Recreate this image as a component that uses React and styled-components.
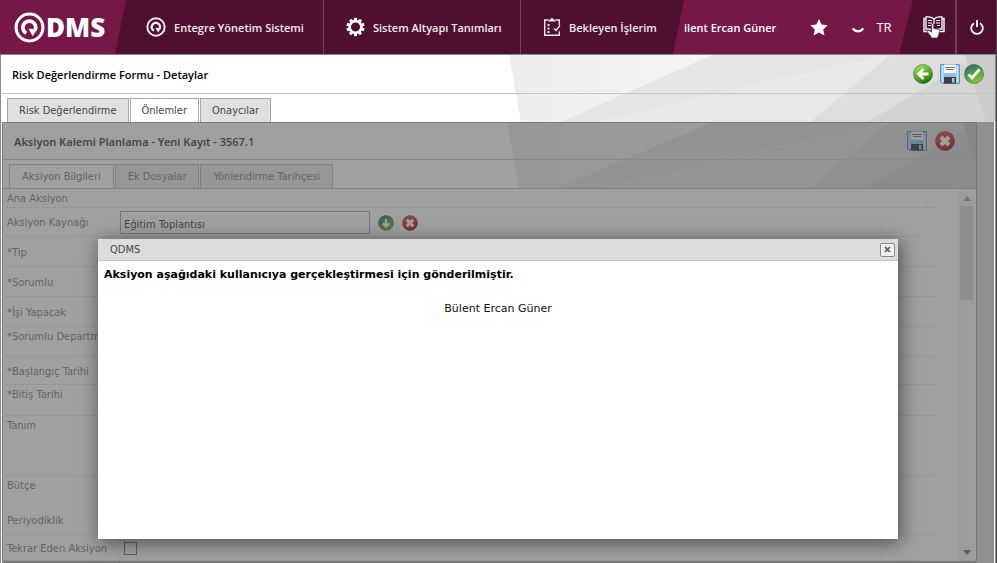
import React, { useState } from 'react'
import styled, { createGlobalStyle } from 'styled-components';

const GlobalStyle = createGlobalStyle`
* { box-sizing: border-box; }
body {
    margin: 0;
    background: #fff;
    font-family: "DejaVu Sans Condensed", "Noto Sans", sans-serif;
    font-size: 11px;
}
button, input { font-family: inherit; font-size: inherit; }
`;

const Page = styled.div`
display: flex;
flex-direction: column;
min-height: 100vh;
border-right: 1px solid #4a4a4a;
`;

const TopBar = styled.header`
display: flex;
height: 54px;
background: #4f0f30;
color: #fff;
font-family: "Open Sans", "Noto Sans", sans-serif;
font-size: 11px;
font-weight: 600;
`;

const Brand = styled.a`
display: flex;
align-items: center;
gap: 1px;
width: 126px;
padding-left: 14px;
background: #751747;
clip-path: polygon(0 0, 100% 0, calc(100% - 11px) 100%, 0 100%);
color: #fff;
text-decoration: none;
font-size: 26px;
font-weight: 800;
flex: none;
`;

const NavItem = styled.a`
display: flex;
align-items: center;
gap: 8px;
flex: 0 0 ${props => props.$width}px;
padding-left: ${props => props.$first ? 20 : 22}px;
border-right: ${props => props.$last ? 'none' : '1px solid #74415a'};
color: #f3eaee;
text-decoration: none;
white-space: nowrap;
`;

const UserBar = styled.div`
display: flex;
align-items: center;
flex: 1;
padding: 0 22px 0 11px;
background: #751747;
clip-path: polygon(11px 0, 100% 0, calc(100% - 14px) 100%, 0 100%);
white-space: nowrap;
`;

const UserName = styled.span`
flex: 1;
`;

const BarButton = styled.button`
display: flex;
align-items: center;
justify-content: center;
width: ${props => props.$width}px;
padding: 0;
border: none;
border-left: ${props => props.$line ? '2px solid #74415a' : 'none'};
background: none;
color: #fff;
cursor: pointer;
font-weight: 400;
font-size: 13px;
`;

const Frame = styled.main`
display: flex;
flex-direction: column;
flex: 1;
padding: 0 0 0 1px;
border: 1px solid #8a8a8a;
border-width: 1px 1px 0 1px;
`;

const Heading = styled.div`
position: relative;
`;

const Backdrop = styled.svg`
position: absolute;
top: 0;
right: ${props => props.$inner ? -17 : 0}px;
height: 100%;
width: 487px;
`;

const TitleRow = styled.div`
position: relative;
display: flex;
align-items: center;
height: ${props => props.$height}px;
padding: 0 ${props => props.$right}px 0 ${props => props.$left}px;
border-bottom: 1px solid ${props => props.$line};
color: ${props => props.$color};
`;

const Title = styled.h1`
flex: 1;
margin: 0;
font-family: "Open Sans", "Noto Sans", sans-serif;
font-size: 11px;
font-weight: 600;
`;

const PanelTitle = styled.h2`
flex: 1;
margin: 0;
font-family: "Noto Sans", sans-serif;
font-size: 11px;
font-weight: 600;
`;

const IconButton = styled.button`
display: flex;
margin-left: ${props => props.$gap || 0}px;
padding: 0;
border: none;
background: none;
cursor: pointer;
`;

const TabRow = styled.div`
position: relative;
display: flex;
gap: 1px;
padding: 4px 0 0 ${props => props.$left}px;
`;

const Tab = styled.button`
height: 24px;
padding: 0 ${props => props.$inner ? 12 : 11}px;
border: 1px solid ${props => props.$inner ? '#c0c0c0' : '#a8a8a8'};
border-bottom: none;
background: ${props => props.$active ? '#fff' : props.$inner ? '#ededed' : '#e0e0e0'};
color: ${props => props.$inner ? '#858585' : '#444'};
cursor: pointer;
`;

const Body = styled.div`
position: relative;
display: flex;
flex: 1;
margin-right: 1px;
padding-right: 17px;
background: #dcdcdc;
`;

const Panel = styled.section`
display: flex;
flex-direction: column;
flex: 1;
border: 1px solid #b0b0b0;
border-bottom-width: 2px;
border-radius: 0 0 4px 4px;
background: #fff;
overflow: hidden;
`;

const Content = styled.div`
display: flex;
flex: 1;
border-top: 1px solid #c0c0c0;
`;

const Form = styled.form`
flex: 1;
padding: 0 22px 0 3px;
`;

const Row = styled.div`
display: grid;
grid-template-columns: 110px 1fr 14px;
column-gap: 2px;
height: ${props => props.$height}px;
`;

const Cell = styled.div`
display: flex;
align-items: ${props => props.$top ? 'flex-start' : 'center'};
padding: 2px 0 0 1px;
border-bottom: ${props => props.$plain ? 'none' : '1px dotted #d6d6d6'};
line-height: 16px;
white-space: nowrap;
color: #858585;
`;

const SourceInput = styled.input`
width: 250px;
height: 23px;
margin-left: 1px;
margin-right: 8px;
padding: 3px 3px 0;
border: 1px solid #acacac;
background: transparent;
color: #454545;
`;

const Check = styled.input`
appearance: none;
width: 13px;
height: 13px;
margin: 0 0 0 5px;
border: 1px solid #7a7a7a;
`;

const ScrollTrack = styled.div`
display: flex;
flex-direction: column;
align-items: center;
width: 17px;
margin-right: 1px;
padding: 7px 0 6px;
background: #f7f7f7;
`;

const ScrollThumb = styled.div`
width: 13px;
height: 94px;
margin: 5px 0 auto;
background: #dadada;
`;

const Overlay = styled.div`
position: absolute;
inset: 0;
display: flex;
justify-content: center;
align-items: flex-start;
padding-top: 117px;
background: rgba(65, 65, 65, 0.5);
`;

const Dialog = styled.div`
width: 800px;
max-width: 90%;
min-height: 300px;
background: #fff;
box-shadow: 2px 3px 18px rgba(0, 0, 0, 0.55);
`;

const DialogBar = styled.div`
display: flex;
align-items: center;
justify-content: space-between;
height: 22px;
padding: 0 3px 0 12px;
border-bottom: 1px solid #c4c4c4;
background: #dcdcdc;
color: #444;
`;

const CloseButton = styled.button`
display: flex;
align-items: center;
justify-content: center;
width: 15px;
height: 14px;
padding: 0;
border: 1px solid #888;
border-radius: 2px;
background: #f0f0f0;
cursor: pointer;
`;

const Message = styled.div`
padding: 5px 6px;
font-family: "DejaVu Sans", sans-serif;
line-height: 17px;
color: #111;
`;

const Strong = styled.p`
margin: 0 0 17px;
font-weight: 700;
color: #000;
`;

const Person = styled.p`
margin: 0;
text-align: center;
`;

// circled Q used both in the logo and in the menu
const QMark = ({ size }) => (
    <svg width={size} height={size} viewBox="0 0 30 30" fill="none" stroke="currentColor">
        <circle cx="15" cy="15" r="13" strokeWidth="3" />
        <path d="M12 20.500a6.200 6.200 0 1 1 8.400-3" strokeWidth="3.600" />
        <path d="M14 16l8.500 1-4.500 6.500z" fill="currentColor" stroke="none" />
    </svg>
)

const GearIcon = () => (
    <svg width="19" height="20" viewBox="-10 -10 20 20" fill="#fff">
        {[0, 36, 72, 108, 144, 180, 216, 252, 288, 324].map(a =>
            <rect key={a} x="-1.6" y="-9.6" width="3.2" height="4" transform={`rotate(${a})`} />)}
        <circle r="6.2" fill="none" stroke="#fff" strokeWidth="2.8" />
    </svg>
)

const ClipboardIcon = () => (
    <svg width="18" height="20" viewBox="0 0 18 20" fill="none" stroke="#f3eaee" strokeWidth="1.4">
        <path d="M5 3H1.7v15.3h14.6v-4M16.3 8V3H13" />
        <path d="M5.5 4.5V2.5h2a1.5 1.5 0 0 1 3 0h2v2z" fill="#f3eaee" stroke="none" />
        <path d="M4.500 8h2M4.500 11.500h2M4.500 15h2" strokeWidth="2" />
        <path d="M11 11.5l2 2 4-5" />
    </svg>
)

const StarIcon = () => (
    <svg width="18" height="17" viewBox="0 0 18 17" fill="#fff">
        <path d="M9 0l2.6 5.6 6.2.7-4.6 4.1 1.3 6.1L9 13.4l-5.5 3.1 1.3-6.1L.2 6.3l6.2-.7z" />
    </svg>
)

const ChevronIcon = () => (
    <svg width="12" height="11" viewBox="0 0 12 11" fill="none" stroke="#fff" strokeWidth="2.200">
        <path d="M.7 6.500Q3 9.300 6 9.300 9 9.300 11.300 6.500" />
    </svg>
)

const BookIcon = () => (
    <svg width="22" height="23" viewBox="0 0 22 23" fill="none" stroke="#fff">
        <path d="M7 15.5H1V2.5h1.5M15 15.5h6V2.5h-1.5" strokeWidth="1.4" />
        <path d="M11 3C9 1 6 .7 3 1v12c3-.2 4 0 5 .5M11 3c2-2 5-2.300 8-2v12c-3-.2-4 0-5 .5M11 3v5" strokeWidth="1.3" />
        <path d="M5 4.500h4M5 7h4M5 9.500h3M13 4.500h4M13 7h4M14 9.500h3" />
        <path d="M8.500 8.500c0-1.400 2.200-1.400 2.200 0v4l4.500.8c1 .2 1.300 1 1.200 2-.2 3-1.200 4-1.800 6.700H8.700C7.500 19 5 17.500 4.200 15c.8-1 2.800-.3 4.300 1.200z" fill="#fff" stroke="#4f0f30" strokeWidth=".6" />
    </svg>
)

const PowerIcon = () => (
    <svg width="14" height="15" viewBox="0 0 14 15" fill="none" stroke="#fff" strokeWidth="1.800">
        <path d="M4 3.200a5.800 5.800 0 1 0 6 0M7 0v7" />
    </svg>
)

const FloppyIcon = () => (
    <svg width="20" height="20" viewBox="0 0 20 20">
        <path d="M.5.5h19v19H2L.5 18z" fill="#8fc0ee" stroke="#5b8fc8" />
        <path d="M1.500 1.500h2v16h-2zM16.500 1.500h2v17h-2z" fill="#c3e0f8" />
        <path d="M4 .5h12V9H4z" fill="#f8f8f8" />
        <path d="M5 3.500h10M6 5.500h8" stroke="#777" />
        <path d="M4 13h12v6.500H4z" fill="#3a3f45" />
        <path d="M12 14h2.500v4.500H12z" fill="#9ccaf0" />
    </svg>
)

const shapes = {
    back: 'M15.500 10H6M10.500 5L5.500 10l5 5',
    check: 'M4.500 10.500l3.500 3.500 7.500-8.500',
    cross: 'M6 6l8 8M14 6l-8 8',
    down: 'M10 5v9M6 10.500l4 4 4-4'
}

const fills = {
    back: ['#8fdc45', '#1f800c'],
    check: ['#357a62', '#7dc437'],
    cross: ['#d9534f', '#b8201e'],
    down: ['#2f8060', '#76b93c']
}

const RoundIcon = ({ type, size = 20 }) => (
    <svg width={size} height={size} viewBox="0 0 20 20">
        <defs>
            <linearGradient id={`g-${type}`} x1="0" y1="0" x2=".5" y2="1">
                <stop offset="0.2" stopColor={fills[type][0]} />
                <stop offset="1" stopColor={fills[type][1]} />
            </linearGradient>
        </defs>
        <circle cx="10" cy="10" r="9.5" fill={`url(#g-${type})`} stroke="#00000055" />
        <path d={shapes[type]} fill="none" stroke="#fff" strokeWidth={type === 'cross' ? 4 : 2.8} />
    </svg>
)

// faceted grey artwork behind the title rows
const Art = ({ inner }) => (
    <Backdrop $inner={inner} viewBox="508 55 487 67" preserveAspectRatio="none" aria-hidden="true">
        <defs>
            <linearGradient id="facet" x1="0" x2="1">
                <stop offset="0" stopColor="#ededed" />
                <stop offset="1" stopColor="#f5f5f5" />
            </linearGradient>
        </defs>
        <path d="M509 55H712L560 122H521z" fill="url(#facet)" />
        <path d="M712 55H890L780 79 600 122H560z" fill="#e5e5e5" />
        <path d="M890 55L810 122H600L780 79z" fill="#e8e8e8" />
        <path d="M890 55H995V122H810z" fill="#dedede" />
        <path d="M965 63L868 122H995V55z" fill="#d4d4d4" />
        <path d="M965 55H995V122h-9z" fill="#cccccc" />
    </Backdrop>
)

const rows = [
    { label: 'Ana Aksiyon', height: 18, top: true, tail: true },
    { label: 'Aksiyon Kaynağı', height: 30, source: true },
    { label: '*Tip', height: 30, tail: true },
    { label: '*Sorumlu', height: 30, tail: true },
    { label: '*İşi Yapacak', height: 30, tail: true },
    { label: '*Sorumlu Departmanı', height: 30, top: true, tail: true },
    { label: '*Başlangıç Tarihi', height: 28, tail: true },
    { label: '*Bitiş Tarihi', height: 31, top: true, tail: true },
    { label: 'Tanım', height: 60, top: true, tail: true },
    { label: 'Bütçe', height: 30, top: true, plain: true },
    { label: 'Periyodiklik', height: 29, tail: true },
    { label: 'Tekrar Eden Aksiyon', height: 26, check: true }
]

const App = () => {
    const [source, setSource] = useState('Eğitim Toplantısı')
    const [open, setOpen] = useState(true)

    return (
        <Page>
            <GlobalStyle />
            <TopBar>
                <Brand href="#"><QMark size={31} /><span>DMS</span></Brand>
                <NavItem href="#" $width={198} $first><QMark size={20} />Entegre Yönetim Sistemi</NavItem>
                <NavItem href="#" $width={197}><GearIcon />Sistem Altyapı Tanımları</NavItem>
                <NavItem href="#" $width={152} $last><ClipboardIcon />Bekleyen İşlerim</NavItem>
                <UserBar>
                    <UserName>ilent Ercan Güner</UserName>
                    <BarButton $width={40} aria-label="Favoriler"><StarIcon /></BarButton>
                    <BarButton $width={38} aria-label="Menü"><ChevronIcon /></BarButton>
                    <BarButton $width={14}>TR</BarButton>
                </UserBar>
                <BarButton $width={42} aria-label="Yardım"><BookIcon /></BarButton>
                <BarButton $width={41} $line aria-label="Çıkış"><PowerIcon /></BarButton>
            </TopBar>
            <Frame>
                <Heading>
                    <Art />
                    <TitleRow $height={39} $left={10} $right={11} $line="#c4c4c4" $color="#000">
                        <Title>Risk Değerlendirme Formu - Detaylar</Title>
                        <IconButton aria-label="Geri"><RoundIcon type="back" /></IconButton>
                        <IconButton $gap={7} aria-label="Kaydet"><FloppyIcon /></IconButton>
                        <IconButton $gap={4} aria-label="Onayla"><RoundIcon type="check" /></IconButton>
                    </TitleRow>
                    <TabRow $left={5}>
                        <Tab>Risk Değerlendirme</Tab>
                        <Tab $active>Önlemler</Tab>
                        <Tab>Onaycılar</Tab>
                    </TabRow>
                </Heading>
                <Body>
                    <Panel>
                        <Heading>
                            <Art inner />
                            <TitleRow $height={37} $left={11} $right={21} $line="#d0d0d0" $color="#4a4a4a">
                                <PanelTitle>Aksiyon Kalemi Planlama - Yeni Kayıt - 3567.1</PanelTitle>
                                <IconButton aria-label="Aksiyonu kaydet"><FloppyIcon /></IconButton>
                                <IconButton $gap={8} aria-label="Kapat"><RoundIcon type="cross" /></IconButton>
                            </TitleRow>
                            <TabRow $left={6}>
                                <Tab $inner $active>Aksiyon Bilgileri</Tab>
                                <Tab $inner>Ek Dosyalar</Tab>
                                <Tab $inner>Yönlendirme Tarihçesi</Tab>
                            </TabRow>
                        </Heading>
                        <Content>
                            <Form>
                                {rows.map((row, index) =>
                                    <Row key={index} $height={row.height}>
                                        <Cell as="label" htmlFor={`field${index}`} $top={row.top} $plain={row.plain}>{row.label}</Cell>
                                        <Cell $plain={row.plain}>
                                            {row.source && <>
                                                <SourceInput id={`field${index}`} value={source} onChange={e => setSource(e.target.value)} />
                                                <IconButton type="button" aria-label="Seç"><RoundIcon type="down" size={16} /></IconButton>
                                                <IconButton type="button" $gap={8} aria-label="Temizle" onClick={() => setSource('')}><RoundIcon type="cross" size={16} /></IconButton>
                                            </>}
                                            {row.check && <Check type="checkbox" id={`field${index}`} />}
                                        </Cell>
                                        <Cell $plain={!row.tail} />
                                    </Row>)}
                            </Form>
                            <ScrollTrack>
                                <svg width="8" height="5"><path d="M4 0l4 5H0z" fill="#aaa" /></svg>
                                <ScrollThumb />
                                <svg width="8" height="5"><path d="M4 5l4-5H0z" fill="#777" /></svg>
                            </ScrollTrack>
                        </Content>
                    </Panel>
                    {open && <Overlay>
                        <Dialog role="dialog" aria-label="QDMS">
                            <DialogBar>
                                QDMS
                                <CloseButton aria-label="Kapat" onClick={() => setOpen(false)}>
                                    <svg width="7" height="7"><path d="M1 1l5 5M6 1L1 6" stroke="#555" strokeWidth="1.6" /></svg>
                                </CloseButton>
                            </DialogBar>
                            <Message>
                                <Strong>Aksiyon aşağıdaki kullanıcıya gerçekleştirmesi için gönderilmiştir.</Strong>
                                <Person>Bülent Ercan Güner</Person>
                            </Message>
                        </Dialog>
                    </Overlay>}
                </Body>
            </Frame>
        </Page>
    )
}

export default App;
